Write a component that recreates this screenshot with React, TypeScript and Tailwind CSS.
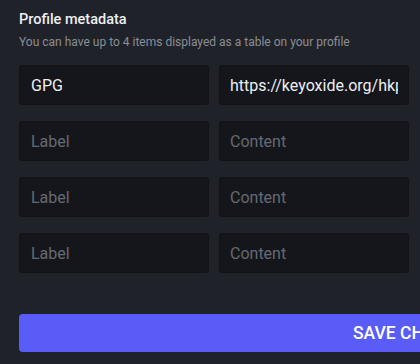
import React from 'react'

const ROWS = [
  { label: 'GPG', content: 'https://keyoxide.org/hkp/' },
  { label: '', content: '' },
  { label: '', content: '' },
  { label: '', content: '' },
]

export default function App() {
  return (
    <div className="h-[364px] w-[420px] overflow-hidden bg-[#202229] font-['Roboto',sans-serif]">
      <div className="pl-[19px] pt-[10px]">
        <h3 className="text-[14.5px] font-medium leading-[20px] text-[#eceef2]">Profile metadata</h3>
        <p className="mt-[4px] text-[12px] leading-[16px] text-[#8a8e97]">
          You can have up to 4 items displayed as a table on your profile
        </p>
        <div className="mt-[15px] flex w-[390px] flex-col gap-[16px]">
          {ROWS.map((row, i) => (
            <div key={i} className="flex gap-[10px]">
              <input
                className="h-[40px] w-[190px] rounded-[3px] border border-[#111216] bg-[#15161b] px-[11px] text-[16px] text-[#eceef2] outline-none placeholder:text-[#676a72]"
                placeholder="Label"
                defaultValue={row.label}
              />
              <input
                className="h-[40px] w-[190px] rounded-[3px] border border-[#111216] bg-[#15161b] px-[10px] text-[16px] text-[#eceef2] outline-none placeholder:text-[#676a72]"
                placeholder="Content"
                defaultValue={row.content}
              />
            </div>
          ))}
        </div>
        <button className="mt-[41px] flex h-[38px] w-[800px] items-center rounded-[4px] bg-[#5a5cf8] pl-[334px] text-[17.5px] font-medium text-white">
          SAVE CHANGES
        </button>
      </div>
    </div>
  )
}
